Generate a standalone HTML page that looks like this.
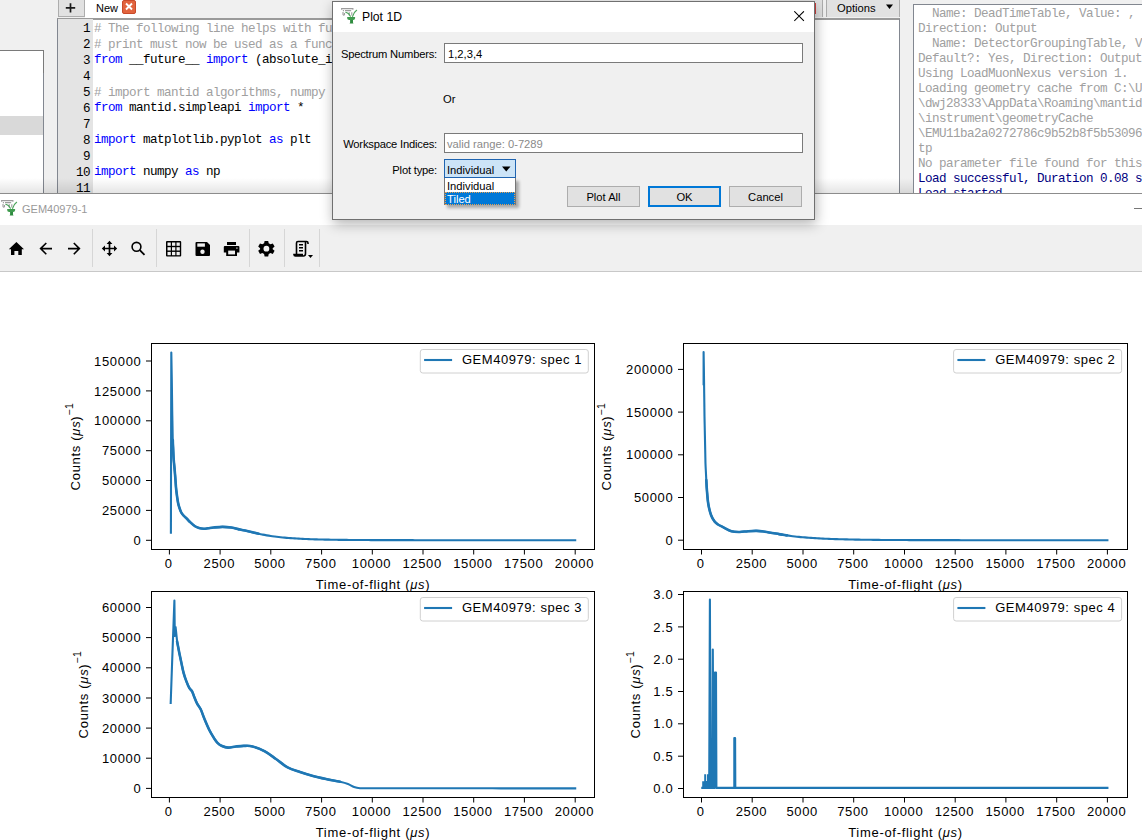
<!DOCTYPE html>
<html><head><meta charset="utf-8">
<style>
html,body{margin:0;padding:0;}
body{width:1142px;height:840px;overflow:hidden;position:relative;background:#f0f0f0;font-family:"Liberation Sans",sans-serif;}
.a{position:absolute;}
.mono{font-family:"Liberation Mono",monospace;font-size:12.6px;letter-spacing:-0.561px;white-space:pre;}
.ui{font-family:"Liberation Sans",sans-serif;font-size:11px;white-space:nowrap;color:#000;}
.kw{color:#0000ff}
.cm{color:#a0a0a0}
</style></head><body>

<!-- ===== TOP AREA (main window behind) ===== -->
<!-- left panel -->
<div class="a" style="left:0;top:50px;width:43px;height:22px;background:#fff;border:1px solid #7a7a7a;border-left:none;"></div>
<div class="a" style="left:0;top:73px;width:43px;height:120px;background:#fff;border-right:1px solid #828790;"></div>
<div class="a" style="left:0;top:116px;width:43px;height:19px;background:#d9d9d9;"></div>

<!-- tabs -->
<div class="a" style="left:58px;top:0;width:25px;height:16px;background:#e1e1e1;border:1px solid #adadad;border-top:none;"></div>
<svg class="a" style="left:58px;top:0;" width="26" height="17"><path d="M70.5 3.2v9.4M65.8 7.9h9.4" transform="translate(-58 0)" stroke="#1a1a1a" stroke-width="1.7"/></svg>
<div class="a" style="left:85px;top:0;width:65px;height:18px;background:#fff;"></div>
<div class="a ui" style="left:96px;top:2px;font-size:11px;line-height:12px;color:#000;">New</div>
<div class="a" style="left:122px;top:0;width:12px;height:12px;background:#e2643e;border:1px solid #c94a2a;border-radius:2px;"></div>
<svg class="a" style="left:122px;top:0;" width="14" height="14" viewBox="0 0 14 14"><path d="M4 3.5L10 9.5M10 3.5L4 9.5" stroke="#fff" stroke-width="1.9"/></svg>

<!-- editor -->
<div class="a" style="left:57px;top:18px;width:841px;height:174px;background:#fff;border:1px solid #828790;border-bottom:none;border-top:2px solid #9a9a9a;"></div>
<div class="a" style="left:58px;top:19px;width:35px;height:174px;background:#e4e4e4;"></div>

<!-- Options button -->
<div class="a" style="left:826px;top:0;width:72px;height:17px;background:#e1e1e1;border-left:1px solid #adadad;border-right:1px solid #adadad;"></div>

<div class="a" style="left:770px;top:0;width:52px;height:17px;background:#e1e1e1;border-right:1px solid #adadad;"></div>
<div class="a" style="left:814px;top:3px;width:2px;height:11px;background:#d04040;"></div>
<div class="a ui" style="left:837px;top:2px;font-size:11.2px;">Options</div>
<svg class="a" style="left:886px;top:4px;" width="8" height="6"><path d="M0 0.5h7L3.5 5z" fill="#000"/></svg>
<!-- output panel -->
<div class="a" style="left:913px;top:4px;width:229px;height:189px;background:#fff;border-left:1px solid #828790;border-top:1px solid #828790;"></div>

<!-- code -->
<div class="a" style="left:58px;top:19px;width:840px;height:174px;overflow:hidden;">
<div class="a mono" style="left:0;top:2px;width:32px;text-align:right;line-height:16px;color:#000;">1</div>
<div class="a mono" style="left:36px;top:2px;line-height:16px;color:#a0a0a0;"># The following line helps with future compatibility with Python 3</div>
<div class="a mono" style="left:0;top:18px;width:32px;text-align:right;line-height:16px;color:#000;">2</div>
<div class="a mono" style="left:36px;top:18px;line-height:16px;color:#a0a0a0;"># print must now be used as a function, e.g print('Hello','World')</div>
<div class="a mono" style="left:0;top:34px;width:32px;text-align:right;line-height:16px;color:#000;">3</div>
<div class="a mono " style="left:36px;top:33px;line-height:16px;color:#000;"><span class="kw">from</span> __future__ <span class="kw">import</span> (absolute_import, division, print_function, unicode_literals)</div>
<div class="a mono" style="left:0;top:50px;width:32px;text-align:right;line-height:16px;color:#000;">4</div>
<div class="a mono " style="left:36px;top:49px;line-height:16px;color:#000;"></div>
<div class="a mono" style="left:0;top:66px;width:32px;text-align:right;line-height:16px;color:#000;">5</div>
<div class="a mono" style="left:36px;top:66px;line-height:16px;color:#a0a0a0;"># import mantid algorithms, numpy and matplotlib</div>
<div class="a mono" style="left:0;top:82px;width:32px;text-align:right;line-height:16px;color:#000;">6</div>
<div class="a mono " style="left:36px;top:81px;line-height:16px;color:#000;"><span class="kw">from</span> mantid.simpleapi <span class="kw">import</span> *</div>
<div class="a mono" style="left:0;top:98px;width:32px;text-align:right;line-height:16px;color:#000;">7</div>
<div class="a mono " style="left:36px;top:97px;line-height:16px;color:#000;"></div>
<div class="a mono" style="left:0;top:114px;width:32px;text-align:right;line-height:16px;color:#000;">8</div>
<div class="a mono " style="left:36px;top:113px;line-height:16px;color:#000;"><span class="kw">import</span> matplotlib.pyplot <span class="kw">as</span> plt</div>
<div class="a mono" style="left:0;top:130px;width:32px;text-align:right;line-height:16px;color:#000;">9</div>
<div class="a mono " style="left:36px;top:129px;line-height:16px;color:#000;"></div>
<div class="a mono" style="left:0;top:146px;width:32px;text-align:right;line-height:16px;color:#000;">10</div>
<div class="a mono " style="left:36px;top:145px;line-height:16px;color:#000;"><span class="kw">import</span> numpy <span class="kw">as</span> np</div>
<div class="a mono" style="left:0;top:162px;width:32px;text-align:right;line-height:16px;color:#000;">11</div>
<div class="a mono " style="left:36px;top:161px;line-height:16px;color:#000;"></div>
</div>
<!-- output -->
<div class="a" style="left:914px;top:5px;width:228px;height:188px;overflow:hidden;">
<div class="a mono" style="left:4px;top:2px;line-height:15px;color:#a0a0a0;">  Name: DeadTimeTable, Value: , Default?: Yes,</div>
<div class="a mono" style="left:4px;top:17px;line-height:15px;color:#a0a0a0;">Direction: Output</div>
<div class="a mono" style="left:4px;top:32px;line-height:15px;color:#a0a0a0;">  Name: DetectorGroupingTable, Value: ,</div>
<div class="a mono" style="left:4px;top:47px;line-height:15px;color:#a0a0a0;">Default?: Yes, Direction: Output</div>
<div class="a mono" style="left:4px;top:62px;line-height:15px;color:#a0a0a0;">Using LoadMuonNexus version 1.</div>
<div class="a mono" style="left:4px;top:77px;line-height:15px;color:#a0a0a0;">Loading geometry cache from C:\Users</div>
<div class="a mono" style="left:4px;top:92px;line-height:15px;color:#a0a0a0;">\dwj28333\AppData\Roaming\mantidproject\mantid</div>
<div class="a mono" style="left:4px;top:107px;line-height:15px;color:#a0a0a0;">\instrument\geometryCache</div>
<div class="a mono" style="left:4px;top:122px;line-height:15px;color:#a0a0a0;">\EMU11ba2a0272786c9b52b8f5b53096ef2f75b5c1bd6.vtp</div>
<div class="a mono" style="left:4px;top:137px;line-height:15px;color:#a0a0a0;">tp</div>
<div class="a mono" style="left:4px;top:152px;line-height:15px;color:#a0a0a0;">No parameter file found for this instrument</div>
<div class="a mono" style="left:4px;top:167px;line-height:15px;color:#000080;">Load successful, Duration 0.08 seconds</div>
<div class="a mono" style="left:4px;top:182px;line-height:15px;color:#000080;">Load started</div>
</div>
<!-- ===== PLOT WINDOW ===== -->
<div class="a" style="left:0;top:178px;width:913px;height:15px;background:linear-gradient(to bottom,rgba(0,0,0,0),rgba(0,0,0,0.10));"></div>
<div class="a" style="left:0;top:193px;width:1142px;height:1px;background:#8c8c8c;"></div>
<div class="a" style="left:0;top:194px;width:1142px;height:31px;background:#fff;"></div>
<div class="a ui" style="left:22px;top:203px;color:#999;font-size:11px;">GEM40979-1</div>
<div class="a" style="left:0;top:225px;width:1142px;height:46px;background:#f0f0f0;border-bottom:1px solid #c8c8c8;"></div>
<div class="a" style="left:0;top:272px;width:1142px;height:568px;background:#fff;"></div>


<!-- title bar icon + toolbar -->
<svg class="a" style="left:-2px;top:197px;" width="22" height="22" viewBox="0 0 22 22">
 <g fill="none" stroke="#9c9c9c" stroke-width="1.1"><path d="M3.3 3.6h11.9M3.6 3v1.8M14.9 3v1.8M7 5.6h5M5.4 5v1.2M12.6 5v1.2M5 7v2.6q.7 1.4 1.5 0V8M11.3 7.2v3.3M13.8 7.2v3.3"/></g>
 <g fill="none" stroke="#4aa35a" stroke-width="1.15" stroke-linecap="round"><path d="M7.8 7.3Q10.6 7.8 12.4 11.2M18.6 5.3Q15.6 7.4 14.6 11.4"/></g>
 <path d="M9.2 12.1h7.9v1.2q0 1.6-2 1.7h-3.9q-2-.1-2-1.7z" fill="#3f9b4e"/>
 <path d="M12.1 14.9h2.9v2.6l.5 1h-3.9l.5-1z" fill="#2f8c3f"/>
</svg>
<svg class="a" style="left:1130px;top:203px;" width="12" height="10"><path d="M4 5.5h8" stroke="#777" stroke-width="1"/></svg>

<svg class="a" style="left:0;top:225px;" width="330" height="46" viewBox="0 225 330 46">
 <!-- separators -->
 <g stroke="#d6d6d6" stroke-width="1"><path d="M92.5 229v38M156.5 229v38M249.5 229v38M284.5 229v38M319.5 229v38"/></g>
 <!-- home -->
 <path d="M16.4 242 L24 249.2 L21.8 249.2 L21.8 255 L18.3 255 L18.3 251 L14.4 251 L14.4 255 L11 255 L11 249.2 L8.8 249.2 Z" fill="#000"/>
 <!-- back -->
 <path d="M52 248.6H40.5M46.3 243L40.6 248.6L46.3 254.3" fill="none" stroke="#000" stroke-width="1.6"/>
 <!-- forward -->
 <path d="M68 248.6H79.5M73.8 243L79.4 248.6L73.8 254.3" fill="none" stroke="#000" stroke-width="1.6"/>
 <!-- move -->
 <path d="M109.5 243.5v10M104.5 248.5h10" stroke="#000" stroke-width="1.7" fill="none"/>
 <path d="M109.5 240.8L112.4 244H106.6Z M109.5 256.2L112.4 253H106.6Z M101.8 248.5L105 245.6V251.4Z M117.2 248.5L114 245.6V251.4Z" fill="#000"/>
 <!-- zoom -->
 <circle cx="136.5" cy="246.8" r="4.4" fill="none" stroke="#000" stroke-width="1.6"/>
 <path d="M139.8 250.2L144.5 254.8" stroke="#000" stroke-width="1.8"/>
 <!-- grid -->
 <rect x="166" y="241" width="15.2" height="15.6" rx="1" fill="#000"/>
 <g fill="#f0f0f0"><rect x="167.5" y="242.5" width="3.3" height="3.3"/><rect x="172" y="242.5" width="3.3" height="3.3"/><rect x="176.5" y="242.5" width="3.3" height="3.3"/>
 <rect x="167.5" y="247.2" width="3.3" height="3.3"/><rect x="172" y="247.2" width="3.3" height="3.3"/><rect x="176.5" y="247.2" width="3.3" height="3.3"/>
 <rect x="167.5" y="251.9" width="3.3" height="3.3"/><rect x="172" y="251.9" width="3.3" height="3.3"/><rect x="176.5" y="251.9" width="3.3" height="3.3"/></g>
 <!-- save -->
 <path d="M195.5 243q0-1 1-1h10.5l3 3v10q0 1-1 1h-12.5q-1 0-1-1z" fill="#000"/>
 <rect x="197.3" y="243.4" width="7.6" height="3.3" fill="#f0f0f0"/>
 <circle cx="202.5" cy="251.8" r="2.2" fill="#f0f0f0"/>
 <!-- print -->
 <rect x="227" y="242" width="9" height="3" fill="#000"/>
 <path d="M223.8 247q0-1 1-1h13.6q1 0 1 1v5.5h-2.4v3.4h-10.8v-3.4h-2.4z" fill="#000"/>
 <rect x="228.2" y="250.6" width="6.8" height="3.8" fill="#f0f0f0"/>
 <rect x="236.3" y="247.5" width="1.2" height="1.2" fill="#f0f0f0"/>
 <!-- gear -->
 <g transform="translate(266.4 248.7)">
  <path d="M-1.8,-7.8 L1.8,-7.8 L2.3,-5.4 L4.1,-4.4 L6.4,-5.2 L8.2,-2.1 L6.3,-0.5 L6.3,0.5 L8.2,2.1 L6.4,5.2 L4.1,4.4 L2.3,5.4 L1.8,7.8 L-1.8,7.8 L-2.3,5.4 L-4.1,4.4 L-6.4,5.2 L-8.2,2.1 L-6.3,0.5 L-6.3,-0.5 L-8.2,-2.1 L-6.4,-5.2 L-4.1,-4.4 L-2.3,-5.4 Z" fill="#000"/>
  <circle r="2.9" fill="#f0f0f0"/>
 </g>
 <!-- script -->
 <g fill="none" stroke="#000" stroke-width="1.6">
  <path d="M296.5 254.5V243q0-1.5 1.5-1.5h8.5q1.5 0 1.5 1.5v1"/>
  <path d="M305.5 242v11.5q0 2.5-2 2.5h-8q-1.5 0-1.5-1.5h9"/>
  <path d="M299 244.8h4M299 247.8h4M299 250.8h4" stroke-width="1.4"/>
 </g>
 <path d="M308 255h5l-2.5 3z" fill="#000"/>
</svg>

<!-- PLOTS START -->
<svg class="a" style="left:0;top:0;" width="1142" height="840" viewBox="0 0 1142 840">
<path d="M169.4 549.5V554.5 M220.1 549.5V554.5 M270.8 549.5V554.5 M321.6 549.5V554.5 M372.3 549.5V554.5 M423 549.5V554.5 M473.7 549.5V554.5 M524.4 549.5V554.5 M575.2 549.5V554.5 M146 540.3H151.5 M146 510.4H151.5 M146 480.5H151.5 M146 450.7H151.5 M146 420.8H151.5 M146 390.9H151.5 M146 361H151.5" stroke="#000" stroke-width="1" fill="none"/>
<g font-family="Liberation Sans" font-size="13" letter-spacing="0.65" fill="#000"><text x="168.6" y="567.7" text-anchor="middle">0</text><text x="219.3" y="567.7" text-anchor="middle">2500</text><text x="270" y="567.7" text-anchor="middle">5000</text><text x="320.8" y="567.7" text-anchor="middle">7500</text><text x="371.5" y="567.7" text-anchor="middle">10000</text><text x="422.2" y="567.7" text-anchor="middle">12500</text><text x="472.9" y="567.7" text-anchor="middle">15000</text><text x="523.6" y="567.7" text-anchor="middle">17500</text><text x="574.4" y="567.7" text-anchor="middle">20000</text><text x="141.4" y="544.9" text-anchor="end">0</text><text x="141.4" y="515" text-anchor="end">25000</text><text x="141.4" y="485.1" text-anchor="end">50000</text><text x="141.4" y="455.3" text-anchor="end">75000</text><text x="141.4" y="425.4" text-anchor="end">100000</text><text x="141.4" y="395.5" text-anchor="end">125000</text><text x="141.4" y="365.6" text-anchor="end">150000</text></g>
<text x="373" y="588.8" text-anchor="middle" font-family="Liberation Sans" font-size="13" letter-spacing="0.7" fill="#000">Time-of-flight (<tspan font-style="italic">μs</tspan>)</text>
<text transform="translate(79.6 446.5) rotate(-90)" text-anchor="middle" font-family="Liberation Sans" font-size="13" letter-spacing="0.7" fill="#000">Counts (<tspan font-style="italic">μs</tspan>)<tspan dy="-6.5" font-size="10.5" letter-spacing="0.5">−1</tspan></text>
<rect x="420.3" y="349.5" width="168" height="23.5" rx="2.5" fill="#fff" fill-opacity="0.8" stroke="#d0d0d0" stroke-width="1"/>
<path d="M424.1 360h28" stroke="#1f77b4" stroke-width="2.1"/>
<text x="461.9" y="364.4" font-family="Liberation Sans" font-size="13" letter-spacing="0.55" fill="#000">GEM40979: spec 1</text>
<path d="M701.5 549.5V554.5 M752.2 549.5V554.5 M803 549.5V554.5 M853.7 549.5V554.5 M904.5 549.5V554.5 M955.2 549.5V554.5 M1005.9 549.5V554.5 M1056.7 549.5V554.5 M1107.4 549.5V554.5 M678 540.2H683.5 M678 497.5H683.5 M678 454.8H683.5 M678 412.1H683.5 M678 369.4H683.5" stroke="#000" stroke-width="1" fill="none"/>
<g font-family="Liberation Sans" font-size="13" letter-spacing="0.65" fill="#000"><text x="700.7" y="567.7" text-anchor="middle">0</text><text x="751.4" y="567.7" text-anchor="middle">2500</text><text x="802.2" y="567.7" text-anchor="middle">5000</text><text x="852.9" y="567.7" text-anchor="middle">7500</text><text x="903.7" y="567.7" text-anchor="middle">10000</text><text x="954.4" y="567.7" text-anchor="middle">12500</text><text x="1005.1" y="567.7" text-anchor="middle">15000</text><text x="1055.9" y="567.7" text-anchor="middle">17500</text><text x="1106.6" y="567.7" text-anchor="middle">20000</text><text x="673.4" y="544.8" text-anchor="end">0</text><text x="673.4" y="502.1" text-anchor="end">50000</text><text x="673.4" y="459.4" text-anchor="end">100000</text><text x="673.4" y="416.7" text-anchor="end">150000</text><text x="673.4" y="374" text-anchor="end">200000</text></g>
<text x="905.5" y="588.8" text-anchor="middle" font-family="Liberation Sans" font-size="13" letter-spacing="0.7" fill="#000">Time-of-flight (<tspan font-style="italic">μs</tspan>)</text>
<text transform="translate(611 446.5) rotate(-90)" text-anchor="middle" font-family="Liberation Sans" font-size="13" letter-spacing="0.7" fill="#000">Counts (<tspan font-style="italic">μs</tspan>)<tspan dy="-6.5" font-size="10.5" letter-spacing="0.5">−1</tspan></text>
<rect x="953.6" y="349.5" width="168" height="23.5" rx="2.5" fill="#fff" fill-opacity="0.8" stroke="#d0d0d0" stroke-width="1"/>
<path d="M957.4 360h28" stroke="#1f77b4" stroke-width="2.1"/>
<text x="995.2" y="364.4" font-family="Liberation Sans" font-size="13" letter-spacing="0.55" fill="#000">GEM40979: spec 2</text>
<path d="M169.4 797.5V802.5 M220.1 797.5V802.5 M270.8 797.5V802.5 M321.6 797.5V802.5 M372.3 797.5V802.5 M423 797.5V802.5 M473.7 797.5V802.5 M524.4 797.5V802.5 M575.2 797.5V802.5 M146 788.4H151.5 M146 758.2H151.5 M146 728.1H151.5 M146 698H151.5 M146 667.8H151.5 M146 637.6H151.5 M146 607.5H151.5" stroke="#000" stroke-width="1" fill="none"/>
<g font-family="Liberation Sans" font-size="13" letter-spacing="0.65" fill="#000"><text x="168.6" y="815.7" text-anchor="middle">0</text><text x="219.3" y="815.7" text-anchor="middle">2500</text><text x="270" y="815.7" text-anchor="middle">5000</text><text x="320.8" y="815.7" text-anchor="middle">7500</text><text x="371.5" y="815.7" text-anchor="middle">10000</text><text x="422.2" y="815.7" text-anchor="middle">12500</text><text x="472.9" y="815.7" text-anchor="middle">15000</text><text x="523.6" y="815.7" text-anchor="middle">17500</text><text x="574.4" y="815.7" text-anchor="middle">20000</text><text x="141.4" y="793" text-anchor="end">0</text><text x="141.4" y="762.9" text-anchor="end">10000</text><text x="141.4" y="732.7" text-anchor="end">20000</text><text x="141.4" y="702.6" text-anchor="end">30000</text><text x="141.4" y="672.4" text-anchor="end">40000</text><text x="141.4" y="642.2" text-anchor="end">50000</text><text x="141.4" y="612.1" text-anchor="end">60000</text></g>
<text x="373" y="836.8" text-anchor="middle" font-family="Liberation Sans" font-size="13" letter-spacing="0.7" fill="#000">Time-of-flight (<tspan font-style="italic">μs</tspan>)</text>
<text transform="translate(87.7 694.5) rotate(-90)" text-anchor="middle" font-family="Liberation Sans" font-size="13" letter-spacing="0.7" fill="#000">Counts (<tspan font-style="italic">μs</tspan>)<tspan dy="-6.5" font-size="10.5" letter-spacing="0.5">−1</tspan></text>
<rect x="420.3" y="597.5" width="168" height="23.5" rx="2.5" fill="#fff" fill-opacity="0.8" stroke="#d0d0d0" stroke-width="1"/>
<path d="M424.1 608h28" stroke="#1f77b4" stroke-width="2.1"/>
<text x="461.9" y="612.4" font-family="Liberation Sans" font-size="13" letter-spacing="0.55" fill="#000">GEM40979: spec 3</text>
<path d="M701.5 797.5V802.5 M752.2 797.5V802.5 M803 797.5V802.5 M853.7 797.5V802.5 M904.5 797.5V802.5 M955.2 797.5V802.5 M1005.9 797.5V802.5 M1056.7 797.5V802.5 M1107.4 797.5V802.5 M678 788.5H683.5 M678 756.2H683.5 M678 723.8H683.5 M678 691.5H683.5 M678 659.2H683.5 M678 626.9H683.5 M678 594.5H683.5" stroke="#000" stroke-width="1" fill="none"/>
<g font-family="Liberation Sans" font-size="13" letter-spacing="0.65" fill="#000"><text x="700.7" y="815.7" text-anchor="middle">0</text><text x="751.4" y="815.7" text-anchor="middle">2500</text><text x="802.2" y="815.7" text-anchor="middle">5000</text><text x="852.9" y="815.7" text-anchor="middle">7500</text><text x="903.7" y="815.7" text-anchor="middle">10000</text><text x="954.4" y="815.7" text-anchor="middle">12500</text><text x="1005.1" y="815.7" text-anchor="middle">15000</text><text x="1055.9" y="815.7" text-anchor="middle">17500</text><text x="1106.6" y="815.7" text-anchor="middle">20000</text><text x="673.4" y="793.1" text-anchor="end">0.0</text><text x="673.4" y="760.8" text-anchor="end">0.5</text><text x="673.4" y="728.4" text-anchor="end">1.0</text><text x="673.4" y="696.1" text-anchor="end">1.5</text><text x="673.4" y="663.8" text-anchor="end">2.0</text><text x="673.4" y="631.5" text-anchor="end">2.5</text><text x="673.4" y="599.1" text-anchor="end">3.0</text></g>
<text x="905.5" y="836.8" text-anchor="middle" font-family="Liberation Sans" font-size="13" letter-spacing="0.7" fill="#000">Time-of-flight (<tspan font-style="italic">μs</tspan>)</text>
<text transform="translate(640.1 694.5) rotate(-90)" text-anchor="middle" font-family="Liberation Sans" font-size="13" letter-spacing="0.7" fill="#000">Counts (<tspan font-style="italic">μs</tspan>)<tspan dy="-6.5" font-size="10.5" letter-spacing="0.5">−1</tspan></text>
<rect x="953.6" y="597.5" width="168" height="23.5" rx="2.5" fill="#fff" fill-opacity="0.8" stroke="#d0d0d0" stroke-width="1"/>
<path d="M957.4 608h28" stroke="#1f77b4" stroke-width="2.1"/>
<text x="995.2" y="612.4" font-family="Liberation Sans" font-size="13" letter-spacing="0.55" fill="#000">GEM40979: spec 4</text>
<path d="M170.9 532.8 L171.3 352.5 L171.8 380 C171.82 381.67 171.89 386.67 171.93 390.00 C171.98 393.33 172.02 396.67 172.07 400.00 C172.11 403.33 172.15 406.67 172.20 410.00 C172.25 413.33 172.32 416.67 172.38 420.00 C172.44 423.33 172.51 426.67 172.57 430.00 C172.63 433.33 172.65 436.83 172.75 440.00 C172.85 443.17 173.03 446.00 173.18 449.00 C173.32 452.00 173.34 454.33 173.60 458.00 C173.86 461.67 174.43 467.25 174.75 471.00 C175.07 474.75 175.25 477.33 175.50 480.50 C175.75 483.67 175.83 486.33 176.25 490.00 C176.67 493.67 177.46 499.50 178.00 502.50 C178.54 505.50 178.96 506.33 179.50 508.00 C180.04 509.67 180.58 511.25 181.25 512.50 C181.92 513.75 182.56 514.46 183.50 515.50 C184.44 516.54 185.82 517.67 186.90 518.75 C187.98 519.83 188.65 520.75 190.00 522.00 C191.35 523.25 193.50 525.25 195.00 526.25 C196.50 527.25 197.54 527.58 199.00 528.00 C200.46 528.42 202.25 528.70 203.75 528.75 C205.25 528.80 206.33 528.51 208.00 528.30 C209.67 528.09 211.33 527.73 213.75 527.50 C216.17 527.27 219.58 526.90 222.50 526.90 C225.42 526.90 228.33 527.07 231.25 527.50 C234.17 527.93 237.71 528.98 240.00 529.50 C242.29 530.02 241.88 529.89 245.00 530.60 C248.12 531.31 255.79 533.08 258.75 533.75 C261.71 534.42 261.42 534.34 262.75 534.61 C264.08 534.88 265.42 535.12 266.75 535.35 C268.08 535.58 269.42 535.80 270.75 536.00 C272.08 536.20 273.42 536.38 274.75 536.56 C276.08 536.73 277.42 536.89 278.75 537.04 C280.08 537.19 281.42 537.33 282.75 537.46 C284.08 537.59 285.42 537.71 286.75 537.83 C288.08 537.94 289.42 538.04 290.75 538.14 C292.08 538.24 293.42 538.33 294.75 538.42 C296.08 538.50 297.42 538.58 298.75 538.65 C300.08 538.73 301.42 538.80 302.75 538.86 C304.08 538.92 305.42 538.98 306.75 539.04 C308.08 539.09 309.42 539.14 310.75 539.19 C312.08 539.24 313.42 539.29 314.75 539.33 C316.08 539.37 317.42 539.41 318.75 539.44 C320.08 539.48 321.42 539.51 322.75 539.54 C324.08 539.58 325.42 539.60 326.75 539.63 C328.08 539.66 329.42 539.68 330.75 539.71 C332.08 539.73 333.42 539.75 334.75 539.77 C336.08 539.79 337.42 539.81 338.75 539.83 C340.08 539.85 341.42 539.86 342.75 539.88 C344.08 539.89 345.42 539.91 346.75 539.92 C348.08 539.93 349.42 539.95 350.75 539.96 C352.08 539.97 353.42 539.98 354.75 539.99 C356.08 540.00 357.42 540.01 358.75 540.02 C360.08 540.03 361.42 540.04 362.75 540.04 C364.08 540.05 365.42 540.06 366.75 540.06 C368.08 540.07 369.42 540.08 370.75 540.08 C372.08 540.09 373.42 540.09 374.75 540.10 C376.08 540.10 377.42 540.11 378.75 540.11 C380.08 540.12 381.42 540.12 382.75 540.12 C384.08 540.13 385.42 540.13 386.75 540.13 C388.08 540.14 389.42 540.14 390.75 540.14 C392.08 540.14 393.42 540.15 394.75 540.15 C396.08 540.15 397.42 540.15 398.75 540.16 C400.08 540.16 401.42 540.16 402.75 540.16 C404.08 540.16 405.42 540.17 406.75 540.17 C408.08 540.17 409.42 540.17 410.75 540.17 C412.08 540.17 413.42 540.17 414.75 540.18 C416.08 540.18 417.42 540.18 418.75 540.18 C420.08 540.18 421.42 540.18 422.75 540.18 C424.08 540.18 425.42 540.18 426.75 540.18 C428.08 540.18 429.42 540.19 430.75 540.19 C432.08 540.19 433.42 540.19 434.75 540.19 C436.08 540.19 437.42 540.19 438.75 540.19 C440.08 540.19 441.42 540.19 442.75 540.19 C444.08 540.19 445.42 540.19 446.75 540.19 C448.08 540.19 449.42 540.19 450.75 540.19 C452.08 540.19 453.42 540.19 454.75 540.19 C456.08 540.19 457.42 540.19 458.75 540.19 C460.08 540.20 461.42 540.20 462.75 540.20 C464.08 540.20 465.42 540.20 466.75 540.20 C468.08 540.20 469.42 540.20 470.75 540.20 C472.08 540.20 473.42 540.20 474.75 540.20 C476.08 540.20 477.42 540.20 478.75 540.20 C480.08 540.20 481.42 540.20 482.75 540.20 C484.08 540.20 485.42 540.20 486.75 540.20 C488.08 540.20 489.42 540.20 490.75 540.20 C492.08 540.20 493.42 540.20 494.75 540.20 C496.08 540.20 497.42 540.20 498.75 540.20 C500.08 540.20 501.42 540.20 502.75 540.20 C504.08 540.20 505.42 540.20 506.75 540.20 C508.08 540.20 509.42 540.20 510.75 540.20 C512.08 540.20 513.42 540.20 514.75 540.20 C516.08 540.20 517.42 540.20 518.75 540.20 C520.08 540.20 521.42 540.20 522.75 540.20 C524.08 540.20 525.42 540.20 526.75 540.20 C528.08 540.20 529.42 540.20 530.75 540.20 C532.08 540.20 533.42 540.20 534.75 540.20 C536.08 540.20 537.42 540.20 538.75 540.20 C540.08 540.20 541.42 540.20 542.75 540.20 C544.08 540.20 545.42 540.20 546.75 540.20 C548.08 540.20 549.42 540.20 550.75 540.20 C552.08 540.20 553.42 540.20 554.75 540.20 C556.08 540.20 557.42 540.20 558.75 540.20 C560.08 540.20 561.42 540.20 562.75 540.20 C564.08 540.20 565.42 540.20 566.75 540.20 C568.08 540.20 569.42 540.20 570.75 540.20 C572.08 540.20 574.01 540.20 574.75 540.20 C575.49 540.20 575.12 540.20 575.20 540.20" fill="none" stroke="#1f77b4" stroke-width="2.1" stroke-linejoin="round" stroke-linecap="square"/>
<path d="M703.6 384.3 L703.6 352.1 L703.9 370 C703.92 371.55 703.98 376.19 704.02 379.28 C704.06 382.37 704.10 385.47 704.14 388.56 C704.18 391.65 704.22 394.75 704.26 397.84 C704.30 400.93 704.34 404.03 704.38 407.12 C704.42 410.21 704.45 413.27 704.50 416.40 C704.55 419.53 704.63 422.75 704.70 425.92 C704.77 429.09 704.83 432.27 704.90 435.44 C704.97 438.61 705.03 441.79 705.10 444.96 C705.17 448.13 705.23 451.31 705.30 454.48 C705.37 457.65 705.40 461.08 705.50 464.00 C705.60 466.92 705.77 469.33 705.90 472.00 C706.03 474.67 706.13 477.00 706.30 480.00 C706.47 483.00 706.57 486.00 706.90 490.00 C707.23 494.00 707.60 499.80 708.30 504.00 C709.00 508.20 710.05 512.28 711.10 515.20 C712.15 518.12 713.45 519.95 714.60 521.50 C715.75 523.05 716.60 523.57 718.00 524.50 C719.40 525.43 720.77 525.97 723.00 527.10 C725.23 528.23 728.60 530.48 731.40 531.30 C734.20 532.12 737.03 532.02 739.80 532.00 C742.57 531.98 745.20 531.38 748.00 531.20 C750.80 531.02 753.77 530.82 756.60 530.90 C759.43 530.98 761.27 531.17 765.00 531.70 C768.73 532.23 776.00 533.58 779.00 534.10 C782.00 534.62 781.67 534.58 783.00 534.80 C784.33 535.02 785.67 535.22 787.00 535.41 C788.33 535.61 789.67 535.79 791.00 535.96 C792.33 536.13 793.67 536.29 795.00 536.44 C796.33 536.60 797.67 536.74 799.00 536.87 C800.33 537.01 801.67 537.13 803.00 537.25 C804.33 537.37 805.67 537.48 807.00 537.59 C808.33 537.69 809.67 537.79 811.00 537.89 C812.33 537.98 813.67 538.07 815.00 538.15 C816.33 538.23 817.67 538.31 819.00 538.38 C820.33 538.46 821.67 538.53 823.00 538.59 C824.33 538.66 825.67 538.72 827.00 538.78 C828.33 538.83 829.67 538.89 831.00 538.94 C832.33 538.99 833.67 539.04 835.00 539.08 C836.33 539.13 837.67 539.17 839.00 539.21 C840.33 539.25 841.67 539.29 843.00 539.32 C844.33 539.36 845.67 539.39 847.00 539.42 C848.33 539.45 849.67 539.48 851.00 539.51 C852.33 539.54 853.67 539.57 855.00 539.59 C856.33 539.61 857.67 539.64 859.00 539.66 C860.33 539.68 861.67 539.70 863.00 539.72 C864.33 539.74 865.67 539.76 867.00 539.78 C868.33 539.79 869.67 539.81 871.00 539.82 C872.33 539.84 873.67 539.85 875.00 539.87 C876.33 539.88 877.67 539.89 879.00 539.91 C880.33 539.92 881.67 539.93 883.00 539.94 C884.33 539.95 885.67 539.96 887.00 539.97 C888.33 539.98 889.67 539.99 891.00 540.00 C892.33 540.00 893.67 540.01 895.00 540.02 C896.33 540.03 897.67 540.03 899.00 540.04 C900.33 540.05 901.67 540.05 903.00 540.06 C904.33 540.06 905.67 540.07 907.00 540.07 C908.33 540.08 909.67 540.08 911.00 540.09 C912.33 540.09 913.67 540.10 915.00 540.10 C916.33 540.11 917.67 540.11 919.00 540.11 C920.33 540.12 921.67 540.12 923.00 540.12 C924.33 540.13 925.67 540.13 927.00 540.13 C928.33 540.13 929.67 540.14 931.00 540.14 C932.33 540.14 933.67 540.14 935.00 540.15 C936.33 540.15 937.67 540.15 939.00 540.15 C940.33 540.15 941.67 540.16 943.00 540.16 C944.33 540.16 945.67 540.16 947.00 540.16 C948.33 540.16 949.67 540.17 951.00 540.17 C952.33 540.17 953.67 540.17 955.00 540.17 C956.33 540.17 957.67 540.17 959.00 540.17 C960.33 540.17 961.67 540.18 963.00 540.18 C964.33 540.18 965.67 540.18 967.00 540.18 C968.33 540.18 969.67 540.18 971.00 540.18 C972.33 540.18 973.67 540.18 975.00 540.18 C976.33 540.18 977.67 540.19 979.00 540.19 C980.33 540.19 981.67 540.19 983.00 540.19 C984.33 540.19 985.67 540.19 987.00 540.19 C988.33 540.19 989.67 540.19 991.00 540.19 C992.33 540.19 993.67 540.19 995.00 540.19 C996.33 540.19 997.67 540.19 999.00 540.19 C1000.33 540.19 1001.67 540.19 1003.00 540.19 C1004.33 540.19 1005.67 540.19 1007.00 540.19 C1008.33 540.19 1009.67 540.19 1011.00 540.19 C1012.33 540.19 1013.67 540.20 1015.00 540.20 C1016.33 540.20 1017.67 540.20 1019.00 540.20 C1020.33 540.20 1021.67 540.20 1023.00 540.20 C1024.33 540.20 1025.67 540.20 1027.00 540.20 C1028.33 540.20 1029.67 540.20 1031.00 540.20 C1032.33 540.20 1033.67 540.20 1035.00 540.20 C1036.33 540.20 1037.67 540.20 1039.00 540.20 C1040.33 540.20 1041.67 540.20 1043.00 540.20 C1044.33 540.20 1045.67 540.20 1047.00 540.20 C1048.33 540.20 1049.67 540.20 1051.00 540.20 C1052.33 540.20 1053.67 540.20 1055.00 540.20 C1056.33 540.20 1057.67 540.20 1059.00 540.20 C1060.33 540.20 1061.67 540.20 1063.00 540.20 C1064.33 540.20 1065.67 540.20 1067.00 540.20 C1068.33 540.20 1069.67 540.20 1071.00 540.20 C1072.33 540.20 1073.67 540.20 1075.00 540.20 C1076.33 540.20 1077.67 540.20 1079.00 540.20 C1080.33 540.20 1081.67 540.20 1083.00 540.20 C1084.33 540.20 1085.67 540.20 1087.00 540.20 C1088.33 540.20 1089.67 540.20 1091.00 540.20 C1092.33 540.20 1093.67 540.20 1095.00 540.20 C1096.33 540.20 1097.67 540.20 1099.00 540.20 C1100.33 540.20 1101.67 540.20 1103.00 540.20 C1104.33 540.20 1106.27 540.20 1107.00 540.20 C1107.73 540.20 1107.33 540.20 1107.40 540.20" fill="none" stroke="#1f77b4" stroke-width="2.1" stroke-linejoin="round" stroke-linecap="square"/>
<path d="M170.7 702.9 L172.2 660 L174.4 600.5 L174.8 636 L175.6 627 L177.1 641.4 C177.47 643.32 178.58 649.32 179.30 652.90 C180.02 656.48 180.68 659.57 181.40 662.90 C182.12 666.23 182.77 669.82 183.60 672.90 C184.43 675.98 185.45 678.90 186.40 681.40 C187.35 683.90 188.35 686.23 189.30 687.90 C190.25 689.57 191.27 689.87 192.10 691.40 C192.93 692.93 193.47 695.07 194.30 697.10 C195.13 699.13 196.03 701.57 197.10 703.60 C198.17 705.63 199.50 706.80 200.70 709.30 C201.90 711.80 202.87 715.15 204.30 718.60 C205.73 722.05 207.63 726.67 209.30 730.00 C210.97 733.33 212.93 736.45 214.30 738.60 C215.67 740.75 216.22 741.67 217.50 742.90 C218.78 744.13 220.25 745.22 222.00 746.00 C223.75 746.78 225.67 747.52 228.00 747.60 C230.33 747.68 233.37 746.78 236.00 746.50 C238.63 746.22 241.05 745.92 243.80 745.90 C246.55 745.88 249.00 745.50 252.50 746.40 C256.00 747.30 260.88 749.20 264.80 751.30 C268.72 753.40 272.20 756.32 276.00 759.00 C279.80 761.68 283.60 765.23 287.60 767.40 C291.60 769.57 295.92 770.62 300.00 772.00 C304.08 773.38 307.77 774.53 312.10 775.70 C316.43 776.87 321.33 777.98 326.00 779.00 C330.67 780.02 336.43 780.97 340.10 781.80 C343.77 782.63 345.67 783.13 348.00 784.00 C350.33 784.87 352.10 786.30 354.10 787.00 C356.10 787.70 357.64 788.00 360.00 788.20 C362.36 788.40 365.52 788.21 368.28 788.21 C371.04 788.21 373.79 788.21 376.55 788.22 C379.31 788.22 382.07 788.22 384.83 788.22 C387.59 788.23 390.35 788.23 393.11 788.23 C395.87 788.23 398.63 788.24 401.38 788.24 C404.14 788.24 406.90 788.24 409.66 788.25 C412.42 788.25 415.18 788.25 417.94 788.25 C420.70 788.26 423.46 788.26 426.22 788.26 C428.97 788.26 431.73 788.27 434.49 788.27 C437.25 788.27 440.01 788.27 442.77 788.28 C445.53 788.28 448.29 788.28 451.05 788.28 C453.81 788.29 456.56 788.29 459.32 788.29 C462.08 788.29 464.84 788.30 467.60 788.30 C470.36 788.30 473.12 788.31 475.88 788.31 C478.64 788.31 481.39 788.31 484.15 788.32 C486.91 788.32 489.67 788.32 492.43 788.32 C495.19 788.33 497.95 788.33 500.71 788.33 C503.47 788.33 506.23 788.34 508.98 788.34 C511.74 788.34 514.50 788.34 517.26 788.35 C520.02 788.35 522.78 788.35 525.54 788.35 C528.30 788.36 531.06 788.36 533.82 788.36 C536.57 788.36 539.33 788.37 542.09 788.37 C544.85 788.37 547.61 788.37 550.37 788.38 C553.13 788.38 555.89 788.38 558.65 788.38 C561.41 788.39 564.16 788.39 566.92 788.39 C569.68 788.39 573.82 788.40 575.20 788.40" fill="none" stroke="#1f77b4" stroke-width="2.1" stroke-linejoin="round" stroke-linecap="square"/>
<path d="M702.3 787.9 L709.2 787.9 L709.9 599.5 L710.6 787.9 L712.4 787.9 L712.8 649.5 L713.6 787.9 L714.6 787.9 L714.9 672.5 L716 672.5 L716.4 787.9 L734.3 787.9 L734.3 738 L735.1 738 L735.3 787.9 L1107.4 787.9" fill="none" stroke="#1f77b4" stroke-width="2.1" stroke-linejoin="round" stroke-linecap="square"/>
<path d="M702.2 788.8V781.2H704.2V774.2H706.2V781H707V774.2H709.8V788.8Z" fill="#1f77b4"/>
<path d="M712.2 788.8V672H716.8V788.8Z" fill="#1f77b4" fill-opacity="0.0"/>
<path d="M172.8 440 C172.82 441.50 173.03 446.00 173.18 449.00 C173.32 452.00 173.34 454.33 173.60 458.00 C173.86 461.67 174.43 467.25 174.75 471.00 C175.07 474.75 175.25 477.33 175.50 480.50 C175.75 483.67 175.83 486.33 176.25 490.00 C176.67 493.67 177.46 499.50 178.00 502.50 C178.54 505.50 178.96 506.33 179.50 508.00 C180.04 509.67 180.58 511.25 181.25 512.50 C181.92 513.75 182.56 514.46 183.50 515.50 C184.44 516.54 185.82 517.67 186.90 518.75 C187.98 519.83 188.65 520.75 190.00 522.00 C191.35 523.25 193.50 525.25 195.00 526.25 C196.50 527.25 197.54 527.58 199.00 528.00 C200.46 528.42 202.25 528.70 203.75 528.75 C205.25 528.80 206.33 528.51 208.00 528.30 C209.67 528.09 211.33 527.73 213.75 527.50 C216.17 527.27 219.58 526.90 222.50 526.90 C225.42 526.90 228.33 527.07 231.25 527.50 C234.17 527.93 237.71 528.98 240.00 529.50 C242.29 530.02 241.88 529.89 245.00 530.60 C248.12 531.31 256.46 533.23 258.75 533.75" fill="none" stroke="#1f77b4" stroke-width="2.6" stroke-linejoin="round" stroke-linecap="round"/>
<path d="M706.3 480 C706.40 481.67 706.57 486.00 706.90 490.00 C707.23 494.00 707.60 499.80 708.30 504.00 C709.00 508.20 710.05 512.28 711.10 515.20 C712.15 518.12 713.45 519.95 714.60 521.50 C715.75 523.05 716.60 523.57 718.00 524.50 C719.40 525.43 720.77 525.97 723.00 527.10 C725.23 528.23 728.60 530.48 731.40 531.30 C734.20 532.12 737.03 532.02 739.80 532.00 C742.57 531.98 745.20 531.38 748.00 531.20 C750.80 531.02 753.77 530.82 756.60 530.90 C759.43 530.98 761.27 531.17 765.00 531.70 C768.73 532.23 776.00 533.58 779.00 534.10 C782.00 534.62 781.67 534.58 783.00 534.80 C784.33 535.02 786.33 535.31 787.00 535.41" fill="none" stroke="#1f77b4" stroke-width="2.6" stroke-linejoin="round" stroke-linecap="round"/>
<path d="M177.1 641.4 C177.47 643.32 178.58 649.32 179.30 652.90 C180.02 656.48 180.68 659.57 181.40 662.90 C182.12 666.23 182.77 669.82 183.60 672.90 C184.43 675.98 185.45 678.90 186.40 681.40 C187.35 683.90 188.35 686.23 189.30 687.90 C190.25 689.57 191.27 689.87 192.10 691.40 C192.93 692.93 193.47 695.07 194.30 697.10 C195.13 699.13 196.03 701.57 197.10 703.60 C198.17 705.63 199.50 706.80 200.70 709.30 C201.90 711.80 202.87 715.15 204.30 718.60 C205.73 722.05 207.63 726.67 209.30 730.00 C210.97 733.33 212.93 736.45 214.30 738.60 C215.67 740.75 216.22 741.67 217.50 742.90 C218.78 744.13 220.25 745.22 222.00 746.00 C223.75 746.78 225.67 747.52 228.00 747.60 C230.33 747.68 233.37 746.78 236.00 746.50 C238.63 746.22 241.05 745.92 243.80 745.90 C246.55 745.88 249.00 745.50 252.50 746.40 C256.00 747.30 260.88 749.20 264.80 751.30 C268.72 753.40 272.20 756.32 276.00 759.00 C279.80 761.68 283.60 765.23 287.60 767.40 C291.60 769.57 295.92 770.62 300.00 772.00 C304.08 773.38 307.77 774.53 312.10 775.70 C316.43 776.87 321.33 777.98 326.00 779.00 C330.67 780.02 337.75 781.33 340.10 781.80" fill="none" stroke="#1f77b4" stroke-width="2.6" stroke-linejoin="round" stroke-linecap="round"/>
<rect x="151.5" y="343.5" width="443" height="206" fill="none" stroke="#000" stroke-width="1"/>
<rect x="683.5" y="343.5" width="444" height="206" fill="none" stroke="#000" stroke-width="1"/>
<rect x="151.5" y="591.5" width="443" height="206" fill="none" stroke="#000" stroke-width="1"/>
<rect x="683.5" y="591.5" width="444" height="206" fill="none" stroke="#000" stroke-width="1"/>
</svg>
<!-- PLOTS END -->
<!-- ===== DIALOG ===== -->
<div class="a" style="left:332px;top:1px;width:481px;height:217px;background:#f0f0f0;border:1px solid #707070;box-shadow:1px 4px 12px rgba(0,0,0,0.3);"></div>
<div class="a" style="left:333px;top:2px;width:481px;height:30px;background:#fff;"></div>


<!-- dialog icon -->
<svg class="a" style="left:338px;top:5px;" width="22" height="22" viewBox="0 0 22 22">
 <g fill="none" stroke="#9c9c9c" stroke-width="1.1"><path d="M3.3 3.6h11.9M3.6 3v1.8M14.9 3v1.8M7 5.6h5M5.4 5v1.2M12.6 5v1.2M5 7v2.6q.7 1.4 1.5 0V8M11.3 7.2v3.3M13.8 7.2v3.3"/></g>
 <g fill="none" stroke="#4aa35a" stroke-width="1.15" stroke-linecap="round"><path d="M7.8 7.3Q10.6 7.8 12.4 11.2M18.6 5.3Q15.6 7.4 14.6 11.4"/></g>
 <path d="M9.2 12.1h7.9v1.2q0 1.6-2 1.7h-3.9q-2-.1-2-1.7z" fill="#3f9b4e"/>
 <path d="M12.1 14.9h2.9v2.6l.5 1h-3.9l.5-1z" fill="#2f8c3f"/>
</svg>
<div class="a ui" style="left:362px;top:10px;font-size:12.2px;">Plot 1D</div>
<svg class="a" style="left:794px;top:11px;" width="11" height="11" viewBox="0 0 11 11"><path d="M0.3 0.3L9.9 9.9M9.9 0.3L0.3 9.9" stroke="#000" stroke-width="1.05"/></svg>

<div class="a ui" style="left:336px;top:48px;width:101px;text-align:right;font-size:11.2px;letter-spacing:-0.2px;">Spectrum Numbers:</div>
<div class="a" style="left:444px;top:43px;width:357px;height:18px;background:#fff;border:1px solid #7a7a7a;"></div>
<div class="a ui" style="left:448px;top:48px;font-size:11.2px;">1,2,3,4</div>
<div class="a ui" style="left:443px;top:93px;font-size:11.2px;">Or</div>
<div class="a ui" style="left:336px;top:138px;width:101px;text-align:right;font-size:11.2px;letter-spacing:-0.2px;">Workspace Indices:</div>
<div class="a" style="left:444px;top:133px;width:357px;height:18px;background:#fff;border:1px solid #7a7a7a;"></div>
<div class="a ui" style="left:447px;top:138px;font-size:11.2px;color:#8a8a8a;">valid range: 0-7289</div>
<div class="a ui" style="left:336px;top:164px;width:101px;text-align:right;font-size:11.2px;letter-spacing:-0.2px;">Plot type:</div>
<div class="a" style="left:444px;top:159px;width:70px;height:17px;background:#cce4f7;border:1px solid #1f64b0;"></div>
<div class="a ui" style="left:447px;top:164px;font-size:11.2px;">Individual</div>
<svg class="a" style="left:502px;top:166px;" width="9" height="6" viewBox="0 0 9 6"><path d="M0 0.5h8.5L4.25 5.5z" fill="#000"/></svg>

<!-- buttons -->
<div class="a" style="left:567px;top:186px;width:71px;height:19px;background:#e1e1e1;border:1px solid #adadad;"></div>
<div class="a ui" style="left:567px;top:191px;width:73px;text-align:center;font-size:11.2px;">Plot All</div>
<div class="a" style="left:648px;top:186px;width:69px;height:17px;background:#e1e1e1;border:2px solid #0078d7;"></div>
<div class="a ui" style="left:648px;top:191px;width:73px;text-align:center;font-size:11.2px;">OK</div>
<div class="a" style="left:729px;top:186px;width:71px;height:19px;background:#e1e1e1;border:1px solid #adadad;"></div>
<div class="a ui" style="left:729px;top:191px;width:73px;text-align:center;font-size:11.2px;">Cancel</div>

<!-- dropdown list -->
<div class="a" style="left:444px;top:178px;width:70px;height:26px;background:#fff;border:1px solid #767676;border-top:none;box-shadow:3px 3px 3px rgba(0,0,0,0.3);"></div>
<div class="a ui" style="left:447px;top:180px;font-size:11.2px;">Individual</div>
<div class="a" style="left:445px;top:192px;width:70px;height:13px;background:#0078d7;outline:1px dotted #e8a050;outline-offset:-1px;"></div>
<div class="a ui" style="left:447px;top:193px;font-size:11.2px;color:#fff;">Tiled</div>

</body></html>
